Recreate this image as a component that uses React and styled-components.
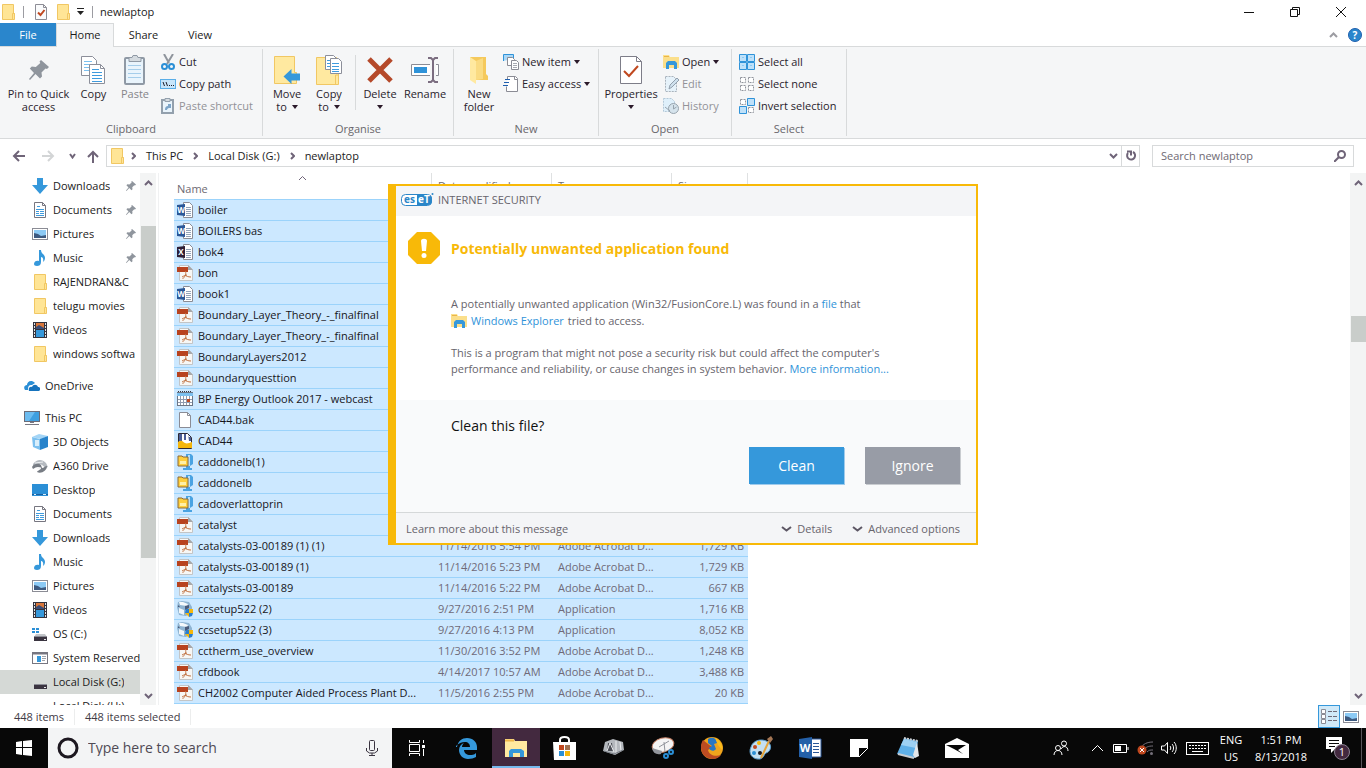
import React from 'react';
import styled, { createGlobalStyle, css } from 'styled-components';

const GlobalStyle = createGlobalStyle`
  * {
    box-sizing: border-box;
  }

  body {
    margin: 0;
    overflow: hidden;
    background: #fff;
    color: #1b1b1b;
    font-family: 'Open Sans', 'Noto Sans', sans-serif;
    font-size: 11px;
    line-height: 16px;
  }

  button, input {
    font: inherit;
    color: inherit;
    margin: 0;
    padding: 0;
    border: 0;
    background: none;
  }

  a {
    color: inherit;
    text-decoration: none;
  }

  svg {
    display: block;
    flex: none;
  }
`;

/* ---------- icons ---------- */

const Svg = ({ w = 16, h = 16, children, ...rest }) => (
  <svg width={w} height={h} viewBox={`0 0 ${w} ${h}`} fill="none" aria-hidden="true" {...rest}>
    {children}
  </svg>
);

const FolderIcon = () => (
  <Svg>
    <path d="M2.500.5h11v9h1v6h-12z" fill="#ffe596" stroke="#f1c763" />
    <path d="M12.500 15V9.500h2" stroke="#f1c763" />
  </Svg>
);

const CheckDocIcon = () => (
  <Svg>
    <path d="M2.500.5h8l3 3v12h-11z" fill="#fafbfc" stroke="#8d8d96" />
    <path d="M10.500.5v3h3" stroke="#8d8d96" />
    <path d="M5 8.500l2.500 2.500 4-5" stroke="#c0481f" strokeWidth="2" />
  </Svg>
);

const PinIcon = ({ size = 10 }) => (
  <svg width={size} height={size} viewBox="0 0 20 20" aria-hidden="true">
    <path
      d="M12 0l8 7-2 2-1.500-.5-4 4 .5 4-2 2-4.500-4.500L1 20l-1-1 5-6L.8 8.500l2-2 4 .5 4.500-4L10.500 1.500z"
      fill="#8f959d"
    />
  </svg>
);

const CopyIcon = () => (
  <Svg w={26} h={28}>
    <path d="M.5.5h11l4 4v15H.5z" fill="#fff" stroke="#8c8f9a" />
    <path d="M3 5.500h8M3 8.500h9M3 11.500h9M3 14.500h9" stroke="#7cc0ef" />
    <path d="M8.500 8.500h11l4 4v15h-15z" fill="#fff" stroke="#8c8f9a" />
    <path d="M19.500 8.500v4h4" stroke="#8c8f9a" />
    <path d="M11 13.500h7M11 16.500h10M11 19.500h10M11 22.500h10M11 25.500h10" stroke="#3f9bdd" />
  </Svg>
);

const PasteIcon = () => (
  <Svg w={22} h={30}>
    <rect x="1" y="3" width="19" height="26" rx="1" fill="#e9f4fc" stroke="#8f99a5" strokeWidth="2" />
    <path d="M5 2.500h3l1-2h4l1 2h3v4H5z" fill="#d5dbe0" stroke="#8f99a5" />
    <path d="M4 10.500h13M4 14.500h13M4 18.500h13M4 22.500h13" stroke="#a5cdea" />
  </Svg>
);

const CutIcon = () => (
  <Svg>
    <path d="M4 0l5 9M13 0L7 10" stroke="#8f959d" strokeWidth="2" />
    <circle cx="4.500" cy="12.500" r="2.500" stroke="#2b8fd6" strokeWidth="2" />
    <circle cx="11.500" cy="12.500" r="2.500" stroke="#2b8fd6" strokeWidth="2" />
  </Svg>
);

const CopyPathIcon = () => (
  <Svg>
    <rect x=".5" y="3.500" width="15" height="9" fill="#c7e5fa" stroke="#5aaee8" />
    <path d="M3 6l1.500 4M6 6l1.500 4" stroke="#1d1d2b" />
    <path d="M9 9.500h1M11 9.500h1M13 9.500h1" stroke="#1d1d2b" />
  </Svg>
);

const PasteShortcutIcon = () => (
  <Svg>
    <rect x="2" y="2" width="11" height="13" fill="#e9f4fc" stroke="#93a0ad" strokeWidth="2" />
    <path d="M5 .500h5v3H5z" fill="#d5dbe0" stroke="#93a0ad" />
    <path d="M5 12c0-3 1-4 3-4V6h3v4H9c-1 0-2 1-2 2z" fill="#7da5c9" />
  </Svg>
);

const MoveToIcon = () => (
  <Svg w={26} h={28}>
    <path d="M.5.5h20v16h2v11H.5z" fill="#ffe9a0" stroke="#f1c763" />
    <path d="M9.500 20.500l8-7.500v4.500h8.500v7h-8.500V28z" fill="#3598db" />
  </Svg>
);

const CopyToIcon = () => (
  <Svg w={26} h={30}>
    <path d="M.5 2.500h20v16h2v11H.5z" fill="#ffe9a0" stroke="#f1c763" />
    <path d="M19.500 29v-9h3" stroke="#f1c763" />
    <path d="M9.500.5h8l3 3v11h-11z" fill="#fff" stroke="#8c8f9a" />
    <path d="M11 5.500h4M11 8.500h4M11 11.500h4" stroke="#3f9bdd" />
    <path d="M14.500 3.500h8l3 3v12h-11z" fill="#fff" stroke="#8c8f9a" />
    <path d="M16 8.500h7M16 11.500h7M16 14.500h7M16 16.500h7" stroke="#3f9bdd" />
  </Svg>
);

const DeleteIcon = () => (
  <Svg w={26} h={26}>
    <path d="M2 2l22 22M24 2L2 24" stroke="#b5492a" strokeWidth="5" />
  </Svg>
);

const RenameIcon = () => (
  <Svg w={28} h={26}>
    <path d="M19 7.500H.5v11H19M25 7.500h2.500v11H25" fill="#fff" stroke="#8b8c95" />
    <rect x="3" y="10" width="13" height="6" fill="#2f93d9" />
    <path d="M17 1h3l2 2 2-2h3M17 25h3l2-2 2 2h3M22 2v22" stroke="#7b6d80" strokeWidth="2" />
  </Svg>
);

const NewFolderIcon = () => (
  <Svg w={20} h={28}>
    <path d="M1 1h16v17l2 2v4H6l-1-6z" fill="#f5c95c" />
    <path d="M1 1l6 4v23l-6-4z" fill="#ffe9a0" />
    <path d="M7 5l7-3v21l-7 1z" fill="#fadb82" />
  </Svg>
);

const NewItemIcon = () => (
  <Svg>
    <path d="M.5 7V.5h10v4" fill="#a9d7f7" stroke="#2f93d9" />
    <path d="M4.500 3.500h5l2 2v6h-7z" fill="#fff" stroke="#8b8c95" />
    <path d="M8.500 6.500h5l2 2v7h-7z" fill="#fff" stroke="#8b8c95" />
    <path d="M10 9.500h4M10 11.500h4M10 13.500h4" stroke="#a7aab2" />
  </Svg>
);

const EasyAccessIcon = () => (
  <Svg>
    <path d="M4.500 3V.5h8l2 2v13h-11v-5" fill="#fff" stroke="#8b8c95" />
    <path d="M11.500.5v3h3" stroke="#8b8c95" />
    <path d="M2 3.500h5M1 6.500h5M0 9.500h5" stroke="#1f5fae" />
  </Svg>
);

const PropertiesIcon = () => (
  <Svg w={22} h={28}>
    <path d="M.5.5h16l5 5v22H.5z" fill="#fff" stroke="#7d7d88" />
    <path d="M16.500.5v5h5" stroke="#7d7d88" />
    <path d="M4 15l5 5 9-10" stroke="#c0481f" strokeWidth="2" />
  </Svg>
);

const ExplorerIcon = () => (
  <Svg>
    <path d="M0 1h6l1 2h9v11H0z" fill="#fbdf8b" />
    <path d="M1 2.500h5" stroke="#eab54b" />
    <path d="M3 15V9l2-2h7l2 2v6h-3v-4H6v4z" fill="#3598db" />
  </Svg>
);

const EditIcon = () => (
  <Svg>
    <path d="M2.500.5h8l3 3v12h-11z" fill="#e6f2fa" stroke="#a9b3bd" strokeDasharray="2 1" />
    <path d="M6 13l1-4 7-7 2 2-7 7z" fill="#cfe1ee" stroke="#93a0ad" />
  </Svg>
);

const HistoryIcon = () => (
  <Svg>
    <path d="M.5.5h8l3 3v10H.5z" fill="#dff0fb" stroke="#b3c8d8" strokeDasharray="2 1" />
    <circle cx="10.500" cy="10.500" r="5" fill="#d5e3ec" stroke="#97a3ad" />
    <path d="M10.500 7v4l3-2M2 9l5 4" stroke="#97a3ad" />
  </Svg>
);

const SelectAllIcon = () => (
  <Svg>
    <path d="M.5.5h7v7h-7zM8.500.5h7v7h-7zM.5 8.500h7v7h-7zM8.500 8.500h7v7h-7z" fill="#bfe1f9" stroke="#2f93d9" />
    <path d="M3 3.500h2M11 3.500h2M3 11.500h2M11 11.500h2" stroke="#8ccaf5" />
  </Svg>
);

const SelectNoneIcon = () => (
  <Svg>
    <path
      d="M1.500 1.500h5v5h-5zM9.500 1.500h5v5h-5zM1.500 9.500h5v5h-5zM9.500 9.500h5v5h-5z"
      fill="#fff"
      stroke="#91949c"
      strokeDasharray="2 1"
    />
  </Svg>
);

const InvertIcon = () => (
  <Svg>
    <path d="M1.500 1.500h5v5h-5zM9.500 9.500h5v5h-5z" fill="#fff" stroke="#91949c" strokeDasharray="2 1" />
    <path d="M8.500.5h7v7h-7zM.5 8.500h7v7h-7z" fill="#bfe1f9" stroke="#2f93d9" />
  </Svg>
);

const DownloadsIcon = () => (
  <Svg>
    <path d="M5 0h6v7h5l-8 9-8-9h5z" fill="#3598db" />
  </Svg>
);

const DocumentsIcon = () => (
  <Svg>
    <path d="M2.500.5h8l3 3v12h-11z" fill="#fff" stroke="#777680" />
    <path d="M10.500.5v3h3" stroke="#777680" />
    <path d="M5 4.500h3M4 7.500h8M4 9.500h3M8 9.500h4M4 11.500h3M8 11.500h4M4 13.500h8" stroke="#3f9bdd" />
  </Svg>
);

const PicturesIcon = () => (
  <Svg>
    <rect x=".5" y="2.500" width="15" height="11" fill="#fff" stroke="#8b8c95" />
    <path d="M2 4h12v8H2z" fill="#8ccaf5" />
    <path d="M2 12V7l4 1 3 2 5-1v3z" fill="#3d5a80" />
  </Svg>
);

const MusicIcon = () => (
  <Svg>
    <path d="M7 0h2c0 4 4 4 4 8 0 2-1 3-2 4 1-4-1-5-2-5v5c0 3-2 4-4 4s-3-1-3-2c0-3 3-4 5-3z" fill="#3598db" />
  </Svg>
);

const VideosIcon = () => (
  <Svg>
    <path d="M1 0h14v16H1z" fill="#34343e" />
    <path d="M4 1h8v6H4z" fill="#d9773a" />
    <path d="M4 8h8v7H4z" fill="#3598db" />
    <path d="M4 5l3-2 5 3v1H4z" fill="#3b4d77" />
    <path d="M2.500 1v15M13.500 1v15" stroke="#dfe3e8" strokeDasharray="2 1" />
  </Svg>
);

const OneDriveIcon = () => (
  <Svg>
    <path d="M1 12c-2-3 0-5 2-5 0-3 4-6 8-2l-3 2c-3 0-4 1-4 5z" fill="#2b8fd6" />
    <path d="M5 13c-1-3 1-5 3-4 1-3 5-3 6 0 3 0 3 4 0 4z" fill="#1673bd" />
  </Svg>
);

const PcIcon = () => (
  <Svg>
    <rect x=".5" y="1.500" width="15" height="10" fill="#3f9fe0" stroke="#6c6c78" />
    <path d="M1 2h10l-6 9H1z" fill="#6cbcf0" />
    <path d="M1 14.500h14M6 12.500h4" stroke="#777883" />
  </Svg>
);

const CubeIcon = () => (
  <Svg>
    <path d="M0 3l7-3 9 2-7 3z" fill="#a4d5f6" />
    <path d="M0 3l8 2v11l-7-3z" fill="#7cc0ef" />
    <path d="M8 5l8-3v11l-8 3z" fill="#2783cb" />
    <path d="M3 6h4v6H3z" fill="#d8eefb" />
  </Svg>
);

const A360Icon = () => (
  <Svg>
    <path d="M1 6c4-5 9-5 13-1l2 4-3 1C10 5 5 5 1 8z" fill="#b5bac0" />
    <path d="M0 9c2-4 7-4 9-2l1 3c2 0 3-2 5-2 0 5-6 8-10 6 1-2 4-2 4-4-3-2-5-1-8 1z" fill="#777c84" />
    <path d="M3 5l8-1M5 10h4" stroke="#eceef0" />
  </Svg>
);

const DesktopIcon = () => (
  <Svg>
    <path d="M0 2h16v12H0z" fill="#2b8fd6" />
    <path d="M0 12.500h16" stroke="#1a5f9e" />
    <path d="M2 12.500h2M11 12.500h3" stroke="#d8eefb" />
  </Svg>
);

const DriveIcon = ({ windows }) => (
  <Svg>
    {windows && <path d="M0 2h3v2H0zM4 2h3v2H4zM0 5h3v2H0zM4 5h3v2H4z" fill="#2b8fd6" />}
    {windows && <path d="M4 8h9l2 3H2z" fill="#c3c6ca" />}
    <path d="M2 11h13v4H2z" fill="#3a3440" />
    <path d="M2 10.500h13" stroke="#8b8c95" />
    <path d="M12 13.500h2" stroke="#e7e7ea" />
  </Svg>
);

const SystemDriveIcon = () => (
  <Svg>
    <rect x=".5" y="2.500" width="15" height="11" fill="#fff" stroke="#777680" />
    <path d="M0 3.500h16" stroke="#777680" strokeWidth="2" />
    <path d="M5 6h4v6H5z" fill="#3598db" />
    <path d="M10 6.500h4M10 8.500h4M10 10.500h3" stroke="#9ea1a8" />
  </Svg>
);

const OfficeIcon = ({ color, letter }) => (
  <Svg>
    <path d="M6.500.5h6l3 3v12h-9z" fill="#fff" stroke="#8b8c95" />
    <path d="M9 5.500h5M9 7.500h5M9 9.500h5M9 11.500h5M9 13.500h5" stroke="#93a3b8" />
    <path d="M0 3l8-1v12l-8-1z" fill={color} />
    <text x="4" y="11" fontSize="8" fontWeight="700" textAnchor="middle" fill="#fff">
      {letter}
    </text>
  </Svg>
);

const PdfIcon = () => (
  <Svg>
    <path d="M2.500.5h9l4 4v11h-13z" fill="#f7f7f5" stroke="#c3c5c6" />
    <path d="M11 0v5h5z" fill="#a5a7aa" />
    <path d="M0 2h11v5H0z" fill="#b8431f" />
    <path d="M8.500 6c1 4-1 6-3 8M8 10c1 1 3 2 6 2M5 12c2-1 3-2 5-2" stroke="#c0703f" />
  </Svg>
);

const CalendarIcon = () => (
  <Svg>
    <rect x=".5" y="1.500" width="15" height="13" fill="#fff" stroke="#6d7685" />
    <path d="M0 2h16v3H0z" fill="#7cc0ef" />
    <path d="M1 .5h14" stroke="#34343e" strokeDasharray="1 1" />
    <path d="M1 8.500h14M1 11.500h14M3.500 5v9M6.500 5v9M9.500 5v9M12.500 5v9" stroke="#8f9bb0" />
    <path d="M10 8h3v3h-3z" fill="#c0481f" />
  </Svg>
);

const BlankIcon = () => (
  <Svg>
    <path d="M2.500.5h8l3 3v12h-11z" fill="#fff" stroke="#8b8c95" />
    <path d="M10.500.5v3h3" stroke="#8b8c95" />
  </Svg>
);

const CadIcon = () => (
  <Svg>
    <path d="M1.500.5h9l4 4v11h-13z" fill="#fff" stroke="#2e2a35" />
    <path d="M2 1h3v7H2zM7 1h2v6H7zM11 1v3h3v4h-2z" fill="#4a5d96" />
    <path d="M1 9c4-3 5 0 7 1s4 0 7-1v6H1z" fill="#f5b70c" />
    <path d="M3 15.500h9" stroke="#2e2a35" />
  </Svg>
);

const ZipIcon = () => (
  <Svg>
    <path d="M9 0h5l2 2v8l-3 2v2h2v2H6v-2h3z" fill="#4aa3e2" />
    <path d="M11 1h2v11h-2z" fill="#b9def6" />
    <path d="M1 2h4l1 1h5v9H1z" fill="#ffcf3d" stroke="#8a6a3a" />
    <path d="M3 7h6v3H3z" fill="#fff0a8" />
  </Svg>
);

const SetupIcon = () => (
  <Svg>
    <path d="M1 1l4-1 7 1 3 5v5l-6 4-7-1-2-8z" fill="#8fb4d2" />
    <path d="M2 1h4l5 2-1 2-7-1z" fill="#f5f9fc" />
    <path d="M2 7l5 2v5l-5-2z" fill="#f1f5f8" />
    <path d="M8 5l4-1v3l-4 2zM1 4l2 2H1z" fill="#4b5a78" />
    <path d="M9 8h3v4H8z" fill="#2b7fd0" />
    <path d="M12 12h4l-1 3-3 1z" fill="#2b7fd0" />
    <path d="M12 8h4v4h-4zM8 12h4v4z" fill="#f5b70c" />
  </Svg>
);

const Caret = ({ up, color = '#6f6478', w = 9, strokeWidth = 2 }) => (
  <Svg w={w} h={6}>
    <path d={up ? `M1 5l${w / 2 - 1}-3.500L${w - 1} 5` : `M1 1l${w / 2 - 1} 3.500L${w - 1} 1`} stroke={color} strokeWidth={strokeWidth} />
  </Svg>
);

const ChevronRight = () => (
  <Svg w={5} h={8}>
    <path d="M1 1l3 3-3 3" stroke="#6f6478" strokeWidth="2" />
  </Svg>
);

const Triangle = () => (
  <Svg w={6} h={4}>
    <path d="M0 0h6L3 4z" fill="#2b1a2a" />
  </Svg>
);

const EsetLogo = () => (
  <Svg w={33} h={16}>
    <rect x=".5" y="2.500" width="30" height="11" rx="4" fill="#fff" stroke="#2b86c8" />
    <path d="M16 3h11a4 4 0 014 4v2a4 4 0 01-4 4H16z" fill="#2b86c8" />
    <text x="3" y="11" fontSize="10" fontWeight="700" fill="#2b86c8">es</text>
    <text x="17" y="11" fontSize="10" fontWeight="700" fill="#fff">eT</text>
    <circle cx="31.500" cy="2" r="1" fill="#2b86c8" />
  </Svg>
);

const AlertIcon = () => (
  <Svg w={32} h={32}>
    <path d="M9 0h14l9 9v14l-9 9H9l-9-9V9z" fill="#f8b908" />
    <path d="M13 9c0-3 6-3 6 0l-1 10h-4z" fill="#fff" />
    <circle cx="16" cy="23.500" r="2.500" fill="#fff" />
  </Svg>
);

/* ---------- window frame ---------- */

const Screen = styled.div`
  display: flex;
  flex-direction: column;
  height: 100vh;
`;

const TitleBar = styled.header`
  display: flex;
  align-items: center;
  height: 23px;
  padding: 0 2px 0 0;

  .sep {
    width: 1px;
    height: 12px;
    background: #9c9ca2;
  }
`;

const QuickTools = styled.div`
  display: flex;
  align-items: center;
  flex: 1;

  .sep:first-of-type {
    margin: 0 9px 0 7px;
  }

  button {
    margin-right: 6px;
  }

  .sep:last-of-type {
    margin: 0 7px 0 2px;
  }
`;

const AppTitle = styled.h1`
  margin: 0;
  font-size: 11px;
  font-weight: 400;
`;

const WindowButton = styled.button`
  display: flex;
  justify-content: center;
  align-items: center;
  width: 46px;
  height: 21px;
`;

const TabBar = styled.nav`
  display: flex;
  height: 24px;
  border-bottom: 1px solid #d8dadb;
`;

const Tab = styled.button`
  width: ${props => props.$width}px;
  height: 23px;

  ${props => props.$kind === 'file' && css`
    background: #2a86cc;
    color: #fff;
  `}

  ${props => props.$kind === 'active' && css`
    height: 24px;
    padding-bottom: 1px;
    border: 1px solid #d8dadb;
    border-bottom: 0;
    background: #f5f6f7;
  `}
`;

const TabTools = styled.div`
  display: flex;
  align-items: center;
  gap: 10px;
  margin-left: auto;
  padding-right: 4px;
`;

/* ---------- ribbon ---------- */

const Ribbon = styled.div`
  display: flex;
  height: 92px;
  padding: 2px 0;
  border-bottom: 1px solid #d8dadb;
  background: #f5f6f7;
  color: #29232c;
`;

const Group = styled.section`
  display: flex;
  flex-direction: column;
  width: ${props => props.$width}px;
  border-right: 1px solid #d8dadb;

  h2 {
    margin: auto 0 0;
    color: #69676c;
    font-size: 11px;
    font-weight: 400;
    line-height: 14px;
    text-align: center;
  }
`;

const Tools = styled.div`
  display: flex;
  padding: 2px 0 0 3px;

  .rule {
    width: 1px;
    height: 55px;
    margin: 4px 3px 0 5px;
    background: #d8dadb;
  }
`;

const BigTool = styled.button`
  display: flex;
  flex-direction: column;
  align-items: center;
  width: ${props => props.$width}px;
  line-height: 13px;
  color: ${props => (props.disabled ? '#85858a' : 'inherit')};

  .art {
    display: flex;
    align-items: center;
    height: 38px;
    margin-bottom: -2px;
  }

  .second {
    display: flex;
    align-items: center;
    gap: 5px;
    min-height: 13px;
  }
`;

const SmallTools = styled.div`
  display: flex;
  flex-direction: column;
  margin-left: ${props => props.$left || 0}px;
`;

const SmallTool = styled.button`
  display: flex;
  align-items: center;
  gap: 3px;
  height: 22px;
  white-space: nowrap;
  color: ${props => (props.disabled ? '#929297' : 'inherit')};
`;

/* ---------- address row ---------- */

const AddressRow = styled.div`
  display: flex;
  align-items: center;
  height: 34px;
  padding: 0 12px;
`;

const NavButtons = styled.div`
  display: flex;
  align-items: center;
  width: 94px;

  button + button {
    margin-left: 17px;
  }

  button:nth-child(3) {
    margin-left: 14px;
  }

  button:nth-child(4) {
    margin-left: 11px;
  }
`;

const AddressBox = styled.div`
  display: flex;
  align-items: center;
  gap: 10px;
  flex: 1;
  height: 22px;
  padding-left: 2px;
  border: 1px solid #d8dadb;

  > svg:first-child {
    margin-right: -4px;
  }

  .end {
    display: flex;
    align-items: center;
    margin-left: auto;
    height: 100%;
  }

  .refresh {
    height: 100%;
    margin-left: 3px;
    padding: 0 2px 0 3px;
    border-left: 1px solid #d8dadb;
  }
`;

const SearchBox = styled.label`
  display: flex;
  align-items: center;
  width: 202px;
  height: 22px;
  margin-left: 12px;
  padding: 0 7px 0 8px;
  border: 1px solid #d8dadb;

  input {
    flex: 1;
    min-width: 0;
    outline: 0;
  }

  input::placeholder {
    color: #6f6a74;
    opacity: 1;
  }
`;

/* ---------- body ---------- */

const Body = styled.main`
  display: flex;
  flex: 1;
  min-height: 0;
`;

const TreePane = styled.aside`
  display: flex;
  width: 159px;
  padding-right: 2px;
  border-right: 1px solid #f0f1f2;
`;

const Tree = styled.ul`
  flex: 1;
  min-width: 0;
  margin: 0;
  padding: 1px 0 0;
  overflow: hidden;
  list-style: none;
`;

const TreeRow = styled.li`
  margin-top: ${props => (props.$top ? 8 : 0)}px;
  background: ${props => (props.$selected ? '#d5d9d6' : 'none')};

  a {
    display: flex;
    align-items: center;
    gap: 5px;
    height: 24px;
    padding: 0 ${props => (props.$pinned ? 4 : 0)}px 0 ${props => (props.$top ? 24 : 32)}px;
    white-space: nowrap;
  }

  svg:nth-of-type(2) {
    margin-left: auto;
  }

  span {
    overflow: hidden;
  }
`;

const Scrollbar = styled.div`
  display: flex;
  flex-direction: column;
  align-items: center;
  justify-content: space-between;
  width: 16px;
  padding: 7px 0 6px;
  background: #f3f4f4;
`;

const Thumb = styled.div`
  width: 15px;
  height: ${props => props.$size}%;
  margin-top: ${props => props.$before}px;
  margin-bottom: auto;
  background: #c9cdca;
`;

const FilePane = styled.section`
  flex: 1;
  padding-left: 15px;
  overflow: hidden;
`;

const FileTable = styled.table`
  width: 574px;
  table-layout: fixed;
  border-collapse: separate;
  border-spacing: 0;

  th {
    height: 26px;
    padding: 0 6px;
    border-right: 1px solid #dfe1e2;
    color: #6d6a72;
    font-weight: 400;
    text-align: left;
  }

  th:first-child {
    padding: 0 3px;
  }

  th svg {
    margin: 0 auto;
  }

  td {
    height: 21px;
    padding: 0 4px 0 6px;
    border-top: 1px solid #9bd3fb;
    background: #cce8ff;
    color: #6f6a78;
    line-height: 20px;
    white-space: nowrap;
  }

  td:first-child {
    padding: 0 3px;
    color: #16161c;
  }

  td:last-child {
    text-align: right;
  }

  tr:last-child td {
    height: 22px;
    border-bottom: 1px solid #9bd3fb;
  }
`;

const FileName = styled.div`
  display: flex;
  align-items: center;
  gap: 5px;
  height: 20px;
`;

const StatusBar = styled.footer`
  display: flex;
  align-items: center;
  height: 23px;
  padding: 0 7px 0 14px;
  color: #3f3b45;

  span {
    padding-right: 10px;
    margin-right: 10px;
    border-right: 1px solid #eceded;
  }

  button:first-of-type {
    margin-left: auto;
    padding: 3px 1px 2px;
    height: 23px;
    border: 1px solid #3598db;
    background: #d0e9f8;
  }

  button:last-of-type {
    margin-left: 3px;
  }
`;

/* ---------- dialog ---------- */

const Overlay = styled.div`
  position: fixed;
  inset: 0;
  display: flex;
  align-items: flex-start;
  justify-content: center;
  padding-top: 184px;
  pointer-events: none;
`;

const Dialog = styled.section`
  width: 590px;
  border: 2px solid #f8b908;
  border-left-width: 8px;
  background: #fff;
  color: #67646c;
  pointer-events: auto;

  header {
    display: flex;
    align-items: center;
    gap: 4px;
    height: 30px;
    padding: 0 5px 2px;
    background: #f4f5f7;
    font-size: 11px;
  }

  a {
    color: #2f93d9;
  }
`;

const Message = styled.div`
  display: grid;
  grid-template-columns: 32px 1fr;
  grid-template-rows: 63px 1fr;
  column-gap: 11px;
  height: 184px;
  padding: 16px 60px 0 12px;

  h2 {
    margin: 0;
    color: #f8b908;
    font-size: 14px;
    font-weight: 700;
    line-height: 34px;
  }

  div {
    grid-column: 2;
    white-space: nowrap;
  }

  p {
    display: flex;
    align-items: center;
    margin: 0;
    line-height: 17px;
  }

  p + p {
    gap: 4px;
  }

  p:last-child {
    display: block;
    margin-top: 16px;
    line-height: 16px;
  }
`;

const Question = styled.div`
  height: 112px;
  padding: 16px 16px 0 55px;
  background: #f9fafb;
  color: #111;
  font-size: 14px;
  line-height: 20px;
`;

const Choices = styled.div`
  display: flex;
  justify-content: flex-end;
  gap: 21px;
  margin-top: 11px;
`;

const Choice = styled.button`
  width: 95px;
  height: 37px;
  background: ${props => (props.$primary ? '#3598db' : '#989ca6')};
  box-shadow: 1px 1px 0 ${props => (props.$primary ? '#9fcbec' : '#c9ccd0')};
  color: #fff;
  font-size: 14px;
`;

const DialogFooter = styled.footer`
  display: flex;
  align-items: center;
  gap: 20px;
  height: 31px;
  padding: 1px 16px 0 10px;
  border-top: 1px solid #d5d8d9;
  background: #f4f5f7;

  button {
    display: flex;
    align-items: center;
    gap: 5px;
  }

  button:first-child {
    margin-right: auto;
  }
`;

/* ---------- taskbar ---------- */

const Taskbar = styled.footer`
  display: flex;
  height: 40px;
  background: #080808;
  color: #fff;
`;

const TaskButton = styled.button`
  display: flex;
  align-items: center;
  justify-content: center;
  width: ${props => props.$width || 48}px;
  height: 40px;
  margin-right: ${props => props.$gap || 0}px;
  border-bottom: 2px solid ${props => (props.$active ? '#76b9ed' : 'transparent')};
  border-top: 2px solid transparent;
  background: ${props => (props.$active ? '#43293f' : 'none')};
`;

const TaskSearch = styled.label`
  display: flex;
  align-items: center;
  gap: 9px;
  width: 344px;
  padding: 0 14px 0 9px;
  background: #f3f4f5;

  input {
    flex: 1;
    min-width: 0;
    outline: 0;
    font-size: 14px;
  }

  input::placeholder {
    color: #4f4a54;
    opacity: 1;
  }
`;

const Tray = styled.div`
  display: flex;
  margin-left: auto;
`;

const TrayText = styled.div`
  display: flex;
  flex-direction: column;
  align-items: center;
  width: ${props => props.$width}px;
  padding-top: 3px;
  line-height: 17px;
`;

const ShowDesktop = styled.button`
  width: 5px;
  border-left: 1px solid #57555a;
`;

const treeItems = [
  { name: 'Downloads', icon: <DownloadsIcon />, pinned: true },
  { name: 'Documents', icon: <DocumentsIcon />, pinned: true },
  { name: 'Pictures', icon: <PicturesIcon />, pinned: true },
  { name: 'Music', icon: <MusicIcon />, pinned: true },
  { name: 'RAJENDRAN&C', icon: <FolderIcon /> },
  { name: 'telugu movies', icon: <FolderIcon /> },
  { name: 'Videos', icon: <VideosIcon /> },
  { name: 'windows softwa', icon: <FolderIcon /> },
  { name: 'OneDrive', icon: <OneDriveIcon />, top: true },
  { name: 'This PC', icon: <PcIcon />, top: true },
  { name: '3D Objects', icon: <CubeIcon /> },
  { name: 'A360 Drive', icon: <A360Icon /> },
  { name: 'Desktop', icon: <DesktopIcon /> },
  { name: 'Documents', icon: <DocumentsIcon /> },
  { name: 'Downloads', icon: <DownloadsIcon /> },
  { name: 'Music', icon: <MusicIcon /> },
  { name: 'Pictures', icon: <PicturesIcon /> },
  { name: 'Videos', icon: <VideosIcon /> },
  { name: 'OS (C:)', icon: <DriveIcon windows /> },
  { name: 'System Reserved', icon: <SystemDriveIcon /> },
  { name: 'Local Disk (G:)', icon: <DriveIcon />, selected: true },
  { name: 'Local Disk (H:)', icon: <DriveIcon /> }
];

const fileIcons = {
  word: <OfficeIcon color="#2b5797" letter="W" />,
  excel: <OfficeIcon color="#2e1f35" letter="X" />,
  pdf: <PdfIcon />,
  calendar: <CalendarIcon />,
  blank: <BlankIcon />,
  cad: <CadIcon />,
  zip: <ZipIcon />,
  setup: <SetupIcon />
};

const files = [
  ['word', 'boiler'],
  ['word', 'BOILERS bas'],
  ['excel', 'bok4'],
  ['pdf', 'bon'],
  ['word', 'book1'],
  ['pdf', 'Boundary_Layer_Theory_-_finalfinal'],
  ['pdf', 'Boundary_Layer_Theory_-_finalfinal'],
  ['pdf', 'BoundaryLayers2012'],
  ['pdf', 'boundaryquesttion'],
  ['calendar', 'BP Energy Outlook 2017 - webcast'],
  ['blank', 'CAD44.bak'],
  ['cad', 'CAD44'],
  ['zip', 'caddonelb(1)'],
  ['zip', 'caddonelb'],
  ['zip', 'cadoverlattoprin'],
  ['pdf', 'catalyst'],
  ['pdf', 'catalysts-03-00189 (1) (1)', '11/14/2016 5:54 PM', 'Adobe Acrobat D...', '1,729 KB'],
  ['pdf', 'catalysts-03-00189 (1)', '11/14/2016 5:23 PM', 'Adobe Acrobat D...', '1,729 KB'],
  ['pdf', 'catalysts-03-00189', '11/14/2016 5:22 PM', 'Adobe Acrobat D...', '667 KB'],
  ['setup', 'ccsetup522 (2)', '9/27/2016 2:51 PM', 'Application', '1,716 KB'],
  ['setup', 'ccsetup522 (3)', '9/27/2016 4:13 PM', 'Application', '8,052 KB'],
  ['pdf', 'cctherm_use_overview', '11/30/2016 3:52 PM', 'Adobe Acrobat D...', '1,248 KB'],
  ['pdf', 'cfdbook', '4/14/2017 10:57 AM', 'Adobe Acrobat D...', '3,488 KB'],
  ['pdf', 'CH2002 Computer Aided Process Plant D...', '11/5/2016 2:55 PM', 'Adobe Acrobat D...', '20 KB']
];

const taskApps = [
  {
    name: 'Edge',
    icon: (
      <Svg w={22} h={22}>
        <path
          d="M1 10C2 4 6 1 11 1c6 0 10 4 10 9v3H8c0 3 3 5 6 5 2 0 4 0 6-2v4c-2 1-5 2-8 2-5 0-9-4-9-9 0-3 2-6 5-7-1 1-2 2-2 4h8c0-3-2-5-5-5-4 0-7 2-10 5z"
          fill="#3598db"
        />
      </Svg>
    )
  },
  {
    name: 'File Explorer',
    active: true,
    icon: (
      <Svg w={22} h={18}>
        <path d="M0 0h9l1 2h12v16H0z" fill="#ffe9a0" />
        <path d="M0 1.500h9" stroke="#efb648" strokeWidth="2" />
        <path d="M4 18v-6l2-2h10l3 2v6h-4v-4H8v4z" fill="#3598db" />
      </Svg>
    )
  },
  {
    name: 'Store',
    icon: (
      <Svg w={24} h={24}>
        <path d="M7 8V4c0-4 9-4 9 0v4" stroke="#fff" strokeWidth="2" />
        <path d="M0 6h23v18H1z" fill="#fff" />
        <path d="M6 9h5v5H6z" fill="#c0481f" />
        <path d="M12 9h5v5h-5z" fill="#a0714f" />
        <path d="M6 15h5v5H6z" fill="#2b8fd6" />
        <path d="M12 15h5v5h-5z" fill="#f5b70c" />
      </Svg>
    )
  },
  {
    name: 'Dictionary',
    icon: (
      <Svg w={22} h={18}>
        <path d="M2 3l8-3 10 3 1 8-9 5-12-4z" fill="#b4b8bd" />
        <path d="M5 4h4l1 8H4z" fill="#4c4f57" />
        <path d="M4 12l3-8 4 9M13 2v12M17 3l1 9" stroke="#eceef0" />
        <path d="M1 12l10 3 9-4" stroke="#777c84" />
      </Svg>
    )
  },
  {
    name: 'Snipping Tool',
    icon: (
      <Svg w={24} h={22}>
        <ellipse cx="12" cy="8" rx="11" ry="7" transform="rotate(-15 12 8)" fill="#f4f4f4" stroke="#c9856a" />
        <path d="M1 11l10 3-1 3c-5 1-8-1-9-6z" fill="#92959c" />
        <path d="M8 10l10-6M13 5l1 10" stroke="#92959c" />
        <circle cx="15" cy="19" r="2" stroke="#2b8fd6" strokeWidth="2" />
        <circle cx="20" cy="15" r="2" stroke="#2b8fd6" strokeWidth="2" />
      </Svg>
    )
  },
  {
    name: 'Firefox',
    icon: (
      <Svg w={24} h={24}>
        <circle cx="12" cy="12" r="11" fill="#f0a51d" />
        <path d="M3 4c-4 6-2 16 5 18 5 2 10 1 13-3-6 2-12 0-13-5l4-3-4-3z" fill="#bd4c22" />
        <path d="M8 3c5-3 9 0 9 4l-3 1 2 5c-2 3-6 2-7-1l3-2-4-3z" fill="#2877c4" />
        <path d="M15 2c5 2 8 7 7 12-1-2-3-3-4-5z" fill="#f9bd1c" />
      </Svg>
    )
  },
  {
    name: 'Paint',
    icon: (
      <Svg w={24} h={24}>
        <path d="M2 11c2-7 11-9 17-5 5 4 2 10-2 11-2 1-2 5-6 6C3 24-1 17 2 11z" fill="#c3dff2" stroke="#5a9ccc" />
        <circle cx="6" cy="11" r="2" fill="#c0481f" />
        <circle cx="10" cy="7" r="2" fill="#f5b70c" />
        <circle cx="5" cy="17" r="2" fill="#2b8fd6" />
        <circle cx="11" cy="17" r="2" fill="#15151a" />
        <path d="M12 22l8-17" stroke="#e4a33a" strokeWidth="2" />
        <path d="M18 3l4-3 2 3-3 4z" fill="#a57755" />
      </Svg>
    )
  },
  {
    name: 'Word',
    icon: (
      <Svg w={24} h={24}>
        <path d="M12 3h11v18H12z" fill="#fff" stroke="#2b5797" />
        <path d="M15 7.500h6M15 10.500h6M15 13.500h6M15 16.500h6" stroke="#2b5797" />
        <path d="M1 3l13-2v22L1 21z" fill="#2460a8" />
        <text x="7" y="16" fontSize="11" fontWeight="700" textAnchor="middle" fill="#fff">W</text>
      </Svg>
    )
  },
  {
    name: 'Sticky Notes',
    icon: (
      <Svg w={18} h={18}>
        <path d="M0 0h18v9H9v9H0z" fill="#fff" />
        <path d="M18 10v8h-8z" fill="#080808" />
        <path d="M18 9l-9 9" stroke="#fff" />
      </Svg>
    )
  },
  {
    name: 'Notepad',
    icon: (
      <Svg w={22} h={22}>
        <path d="M7 1l14 3-3 17L0 17z" fill="#5fb0e8" />
        <path d="M7 2l13 3-1 6-15-3z" fill="#9ed1f3" />
        <path d="M20 5l2 14-4 2-2-3z" fill="#e3e6e9" />
        <path d="M7 1l14 3" stroke="#c8ccd0" strokeWidth="2" strokeDasharray="2 1" />
        <path d="M1 17l16 4" stroke="#c8ccd0" strokeWidth="2" />
      </Svg>
    )
  },
  {
    name: 'Mail',
    icon: (
      <Svg w={24} h={20}>
        <path d="M0 6l12-6 12 6v14H0z" fill="#fff" />
        <path d="M1 7l20 0-8 5 5 4-9-5z" fill="#080808" />
      </Svg>
    )
  }
];

function TreeView() {
  return (
    <TreePane>
      <Tree>
        {treeItems.map((item, index) => (
          <TreeRow key={index} $top={item.top} $selected={item.selected} $pinned={item.pinned}>
            <a href="#tree">
              {item.icon}
              <span>{item.name}</span>
              {item.pinned && <PinIcon size={10} />}
            </a>
          </TreeRow>
        ))}
      </Tree>
      <Scrollbar>
        <Caret up />
        <Thumb $size={64} $before={40} />
        <Caret />
      </Scrollbar>
    </TreePane>
  );
}

function FileList() {
  return (
    <FilePane>
      <FileTable>
        <colgroup>
          <col style={{ width: 258 }} />
          <col style={{ width: 120 }} />
          <col style={{ width: 120 }} />
          <col />
        </colgroup>
        <thead>
          <tr>
            <th>
              <Caret up strokeWidth={1} />
              Name
            </th>
            <th>Date modified</th>
            <th>Type</th>
            <th>Size</th>
          </tr>
        </thead>
        <tbody>
          {files.map(([kind, name, date, type, size], index) => (
            <tr key={index}>
              <td>
                <FileName>
                  {fileIcons[kind]}
                  {name}
                </FileName>
              </td>
              <td>{date}</td>
              <td>{type}</td>
              <td>{size}</td>
            </tr>
          ))}
        </tbody>
      </FileTable>
    </FilePane>
  );
}

function RibbonBar() {
  return (
    <Ribbon>
      <Group $width={263}>
        <Tools>
          <BigTool $width={71}>
            <span className="art"><PinIcon size={20} /></span>
            Pin to Quick
            <span className="second">access</span>
          </BigTool>
          <BigTool $width={39}>
            <span className="art"><CopyIcon /></span>
            Copy
          </BigTool>
          <BigTool $width={44} disabled>
            <span className="art"><PasteIcon /></span>
            Paste
          </BigTool>
          <SmallTools $left={3}>
            <SmallTool><CutIcon />Cut</SmallTool>
            <SmallTool><CopyPathIcon />Copy path</SmallTool>
            <SmallTool disabled><PasteShortcutIcon />Paste shortcut</SmallTool>
          </SmallTools>
        </Tools>
        <h2>Clipboard</h2>
      </Group>
      <Group $width={191}>
        <Tools>
          <BigTool $width={42}>
            <span className="art"><MoveToIcon /></span>
            Move
            <span className="second">to <Triangle /></span>
          </BigTool>
          <BigTool $width={42}>
            <span className="art"><CopyToIcon /></span>
            Copy
            <span className="second">to <Triangle /></span>
          </BigTool>
          <div className="rule" />
          <BigTool $width={42}>
            <span className="art"><DeleteIcon /></span>
            Delete
            <span className="second"><Triangle /></span>
          </BigTool>
          <BigTool $width={48}>
            <span className="art"><RenameIcon /></span>
            Rename
          </BigTool>
        </Tools>
        <h2>Organise</h2>
      </Group>
      <Group $width={145}>
        <Tools>
          <BigTool $width={44}>
            <span className="art"><NewFolderIcon /></span>
            New
            <span className="second">folder</span>
          </BigTool>
          <SmallTools $left={2}>
            <SmallTool><NewItemIcon />New item <Triangle /></SmallTool>
            <SmallTool><EasyAccessIcon />Easy access <Triangle /></SmallTool>
          </SmallTools>
        </Tools>
        <h2>New</h2>
      </Group>
      <Group $width={133}>
        <Tools>
          <BigTool $width={58}>
            <span className="art"><PropertiesIcon /></span>
            Properties
            <span className="second"><Triangle /></span>
          </BigTool>
          <SmallTools $left={3}>
            <SmallTool><ExplorerIcon />Open <Triangle /></SmallTool>
            <SmallTool disabled><EditIcon />Edit</SmallTool>
            <SmallTool disabled><HistoryIcon />History</SmallTool>
          </SmallTools>
        </Tools>
        <h2>Open</h2>
      </Group>
      <Group $width={115}>
        <Tools>
          <SmallTools $left={4}>
            <SmallTool><SelectAllIcon />Select all</SmallTool>
            <SmallTool><SelectNoneIcon />Select none</SmallTool>
            <SmallTool><InvertIcon />Invert selection</SmallTool>
          </SmallTools>
        </Tools>
        <h2>Select</h2>
      </Group>
    </Ribbon>
  );
}

function AddressBar() {
  return (
    <AddressRow>
      <NavButtons>
        <button aria-label="Back">
          <Svg w={13} h={12}><path d="M13 6H2M7 1L2 6l5 5" stroke="#6f6478" strokeWidth="2" /></Svg>
        </button>
        <button aria-label="Forward" disabled>
          <Svg w={13} h={12}><path d="M0 6h11M6 1l5 5-5 5" stroke="#d3d5d6" strokeWidth="2" /></Svg>
        </button>
        <button aria-label="Recent locations"><Caret w={7} /></button>
        <button aria-label="Up">
          <Svg w={12} h={13}><path d="M6 13V2M1 7l5-5 5 5" stroke="#6f6478" strokeWidth="2" /></Svg>
        </button>
      </NavButtons>
      <AddressBox>
        <FolderIcon />
        <ChevronRight />
        <a href="#pc">This PC</a>
        <ChevronRight />
        <a href="#disk">Local Disk (G:)</a>
        <ChevronRight />
        <a href="#folder">newlaptop</a>
        <div className="end">
          <button aria-label="Previous locations"><Caret /></button>
          <button className="refresh" aria-label="Refresh">
            <Svg w={12} h={12}>
              <path d="M8 2a4 4 0 11-5 1M2 1.500h4v4" stroke="#6f6478" strokeWidth="2" />
            </Svg>
          </button>
        </div>
      </AddressBox>
      <SearchBox>
        <input type="text" aria-label="Search newlaptop" placeholder="Search newlaptop" />
        <Svg w={12} h={12}>
          <circle cx="7.500" cy="4.500" r="3.500" stroke="#6f6478" strokeWidth="2" />
          <path d="M5 7l-5 5" stroke="#6f6478" strokeWidth="2" />
        </Svg>
      </SearchBox>
    </AddressRow>
  );
}

function SecurityAlert() {
  return (
    <Overlay>
      <Dialog role="alertdialog" aria-label="Potentially unwanted application found">
        <header>
          <EsetLogo />
          INTERNET SECURITY
        </header>
        <Message>
          <AlertIcon />
          <h2>Potentially unwanted application found</h2>
          <div>
            <p>A potentially unwanted application (Win32/FusionCore.L) was found in a&nbsp;<a href="#file">file</a>&nbsp;that</p>
            <p><ExplorerIcon /><a href="#explorer">Windows Explorer</a> tried to access.</p>
            <p>
              This is a program that might not pose a security risk but could affect the computer's
              <br />
              performance and reliability, or cause changes in system behavior. <a href="#more">More information...</a>
            </p>
          </div>
        </Message>
        <Question>
          Clean this file?
          <Choices>
            <Choice $primary>Clean</Choice>
            <Choice>Ignore</Choice>
          </Choices>
        </Question>
        <DialogFooter>
          <button>Learn more about this message</button>
          <button><Caret w={11} color="#5d5765" />Details</button>
          <button><Caret w={11} color="#5d5765" />Advanced options</button>
        </DialogFooter>
      </Dialog>
    </Overlay>
  );
}

function SystemTray() {
  return (
    <Tray>
      <TaskButton aria-label="People">
        <Svg w={16} h={16}>
          <circle cx="5" cy="8" r="2.500" stroke="#fff" />
          <circle cx="11" cy="3.500" r="2.500" stroke="#fff" />
          <path d="M1 15c0-6 8-6 8 0M8 9c2-4 7-3 7 2" stroke="#fff" />
        </Svg>
      </TaskButton>
      <TaskButton $width={24} aria-label="Show hidden icons">
        <Svg w={13} h={8}><path d="M1 7l5.500-5.500L12 7" stroke="#fff" /></Svg>
      </TaskButton>
      <TaskButton $width={24} aria-label="Battery">
        <Svg w={16} h={9}>
          <path d="M.5.5h13v8H.5zM15 3v3" stroke="#fff" />
          <path d="M2 2h6v5H2z" fill="#fff" />
        </Svg>
      </TaskButton>
      <TaskButton $width={24} aria-label="Network">
        <Svg w={16} h={14}>
          <path d="M4 7c2-4 6-6 12-6M7 9c2-3 4-4 9-4M10 11c2-2 3-2 6-2" stroke="#75707a" />
          <circle cx="14.500" cy="12.500" r="1.500" fill="#75707a" />
          <circle cx="5" cy="9" r="4.500" fill="#c0481f" />
          <path d="M3 7l4 4M7 7l-4 4" stroke="#fff" />
        </Svg>
      </TaskButton>
      <TaskButton $width={24} aria-label="Volume">
        <Svg w={17} h={14}>
          <path d="M.5 5h3l3-3.500v11L3.500 9h-3z" stroke="#fff" />
          <path d="M9 5c1 1 1 3 0 4M11 3c2 2 2 6 0 8M13 1c3 3 3 9 0 12" stroke="#fff" />
        </Svg>
      </TaskButton>
      <TaskButton $width={33} aria-label="Touch keyboard">
        <Svg w={23} h={13}>
          <rect x=".5" y=".5" width="22" height="12" stroke="#fff" />
          <path d="M3 3.500h17M3 6.500h17" stroke="#fff" strokeDasharray="2 1" />
          <path d="M6 9.500h11" stroke="#fff" />
        </Svg>
      </TaskButton>
      <TrayText $width={34}>
        <span>ENG</span>
        <span>US</span>
      </TrayText>
      <TrayText $width={66}>
        <span>1:51 PM</span>
        <span>8/13/2018</span>
      </TrayText>
      <TaskButton $width={47} aria-label="Notifications">
        <Svg w={24} h={24}>
          <path d="M0 1h16v12H9l-4 4v-4H0z" fill="#fff" />
          <path d="M3 4.500h10M3 7.500h10M3 10.500h6" stroke="#080808" />
          <circle cx="16" cy="16" r="7.500" fill="#43293f" stroke="#8b8190" />
          <text x="16" y="20" fontSize="11" textAnchor="middle" fill="#fff">1</text>
        </Svg>
      </TaskButton>
      <ShowDesktop aria-label="Show desktop" />
    </Tray>
  );
}

function App() {
  return (
    <Screen>
      <GlobalStyle />
      <TitleBar>
        <QuickTools>
          <FolderIcon />
          <div className="sep" />
          <button aria-label="Properties"><CheckDocIcon /></button>
          <button aria-label="New folder"><FolderIcon /></button>
          <button aria-label="Customise toolbar">
            <Svg w={7} h={7}>
              <path d="M0 .5h7" stroke="#222" />
              <path d="M0 3h7L3.500 7z" fill="#222" />
            </Svg>
          </button>
          <div className="sep" />
          <AppTitle>newlaptop</AppTitle>
        </QuickTools>
        <WindowButton aria-label="Minimise">
          <Svg w={10} h={10}><path d="M0 5.500h10" stroke="#111" /></Svg>
        </WindowButton>
        <WindowButton aria-label="Restore">
          <Svg w={10} h={10}><path d="M.5 2.500h7v7h-7zM2.500 2.500v-2h7v7h-2" stroke="#111" /></Svg>
        </WindowButton>
        <WindowButton aria-label="Close">
          <Svg w={10} h={10}><path d="M0 0l10 10M10 0L0 10" stroke="#111" /></Svg>
        </WindowButton>
      </TitleBar>
      <TabBar>
        <Tab $width={56} $kind="file">File</Tab>
        <Tab $width={58} $kind="active">Home</Tab>
        <Tab $width={59}>Share</Tab>
        <Tab $width={54}>View</Tab>
        <TabTools>
          <Caret up color="#9c9ca2" />
          <Svg w={14} h={14}>
            <circle cx="7" cy="7" r="6.500" fill="#2b86cc" stroke="#1f5fae" />
            <text x="7" y="11" fontSize="10" fontWeight="700" textAnchor="middle" fill="#fff">?</text>
          </Svg>
        </TabTools>
      </TabBar>
      <RibbonBar />
      <AddressBar />
      <Body>
        <TreeView />
        <FileList />
        <Scrollbar>
          <Caret up />
          <Thumb $size={5} $before={130} />
          <Caret />
        </Scrollbar>
      </Body>
      <StatusBar>
        <span>448 items</span>
        <span>448 items selected</span>
        <button aria-label="Details view">
          <Svg w={18} h={16}>
            <path d="M1.500.5h4v4h-4zM1.500 5.500h4v4h-4zM1.500 10.500h4v4h-4z" fill="#fff" stroke="#8b8c95" />
            <path d="M8 2.500h4M13 2.500h4M8 7.500h4M13 7.500h4M8 11.500h4M13 11.500h4" stroke="#6f6a78" />
          </Svg>
        </button>
        <button aria-label="Thumbnail view"><PicturesIcon /></button>
      </StatusBar>
      <Taskbar>
        <TaskButton aria-label="Start">
          <Svg w={16} h={16}>
            <path d="M0 2l6-1v6H0zM7 1l9-1v7H7zM0 8h6v7l-6-1zM7 8h9v8l-9-1z" fill="#fff" />
          </Svg>
        </TaskButton>
        <TaskSearch>
          <Svg w={22} h={22}><circle cx="11" cy="11" r="9" stroke="#1d1820" strokeWidth="3" /></Svg>
          <input type="text" aria-label="Type here to search" placeholder="Type here to search" />
          <Svg w={12} h={16}>
            <rect x="3.500" y=".5" width="5" height="10" rx="1" stroke="#3a3440" />
            <path d="M.5 8v3l3 2h5l3-2V8M6 13v3M3 15.500h6" stroke="#3a3440" />
          </Svg>
        </TaskSearch>
        <TaskButton $width={50} $gap={1} aria-label="Task view">
          <Svg w={17} h={16}>
            <path d="M.5 0v2.500h10V0M.5 4.500h10v7H.5zM.5 16v-2.500h10V16M14.500 0v3M14.500 9v7" stroke="#fff" />
            <path d="M13 5h3v3h-3z" fill="#fff" />
          </Svg>
        </TaskButton>
        {taskApps.map(app => (
          <TaskButton key={app.name} $gap={1} $active={app.active} aria-label={app.name}>
            {app.icon}
          </TaskButton>
        ))}
        <SystemTray />
      </Taskbar>
      <SecurityAlert />
    </Screen>
  );
}

export default App;
